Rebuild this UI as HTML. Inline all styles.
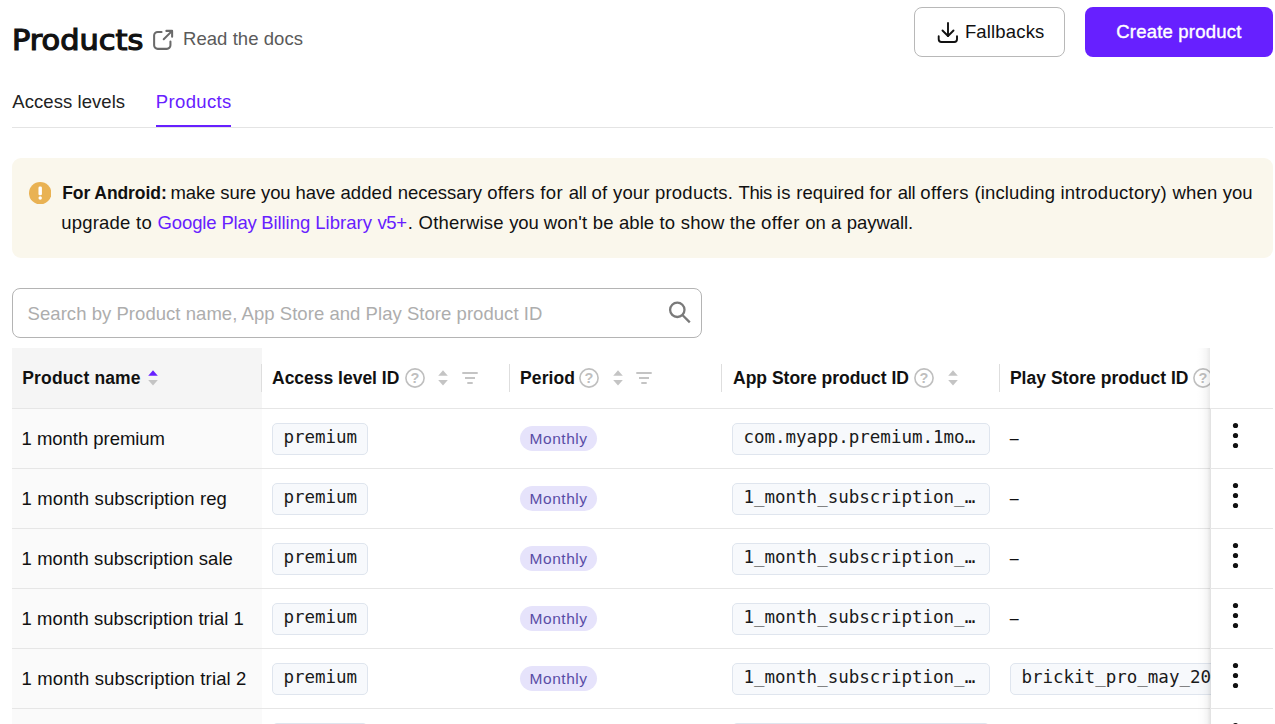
<!DOCTYPE html><html lang="en"><head><meta charset="utf-8"><title>Products</title><style>
*{box-sizing:border-box;margin:0;padding:0}
html,body{width:1275px;height:724px;overflow:hidden;background:#fff}
body{position:relative;font-family:"Liberation Sans",sans-serif;color:#111}
.abs{position:absolute;white-space:nowrap}
.ico{position:absolute}
.btn{position:absolute;top:7px;height:50px;border-radius:8px}
.b1{left:914px;width:151px;border:1px solid #b8b8b8;background:#fff}
.b2{left:1085px;width:188px;background:#6720ff}
.tabline{position:absolute;left:12px;top:127px;width:1261px;height:1px;background:#e4e4e4}
.tabsel{position:absolute;left:156px;top:125px;width:75px;height:2px;background:#6720ff}
.alert{position:absolute;left:12px;top:158px;width:1261px;height:100px;border-radius:9px;background:#faf7ec}
.search{position:absolute;left:12px;top:288px;width:690px;height:50px;border:1px solid #b4b4b4;border-radius:8px;background:#fff}
.th1{position:absolute;left:12px;top:348px;width:250px;height:60px;background:#f5f5f5}
.hline{position:absolute;left:12px;top:408px;width:1261px;height:1px;background:#e6e6e6}
.sep{position:absolute;top:364px;width:1px;height:28px;background:#dedede}
.rl{position:absolute;left:12px;width:1261px;height:1px;background:#e6e6e6}
.c1{position:absolute;left:12px;width:250px;height:59px;background:#fafafa}
.chip{position:absolute;height:32px;border:1px solid #dfe5ee;border-radius:5px;background:#f7f9fc}
.pill{position:absolute;left:520px;width:77px;height:25px;border-radius:13px;background:#e6e3fb}
.shadow{position:absolute;width:14px}
.sh1{left:1196px;top:348px;height:60px;background:linear-gradient(to right,rgba(0,0,0,0),rgba(0,0,0,0.012) 40%,rgba(0,0,0,0.035) 72%,rgba(0,0,0,0.085))}
.sh2{left:1197px;top:408px;height:316px;background:linear-gradient(to right,rgba(0,0,0,0),rgba(0,0,0,0.012) 40%,rgba(0,0,0,0.04) 72%,rgba(0,0,0,0.12))}
.sticky{position:absolute;background:#fff}
.st1{left:1210px;top:348px;width:65px;height:60px}
.st2{left:1211px;top:408px;width:64px;height:316px}
.dots{fill:#111}
</style></head><body>
<span class="abs" style="left:11.8px;top:28.07px;font-size:27.5px;line-height:24px;font-family:'DejaVu Sans',sans-serif;-webkit-text-stroke:1.2px #111;transform-origin:0 0;transform:scaleX(1.105);">Products</span>
<svg class="ico" style="left:151px;top:28px" width="24" height="24" viewBox="0 0 20 20" fill="none" stroke="#6a6a6a" stroke-width="1.7" stroke-linecap="round" stroke-linejoin="round"><path d="M8.800 3.3H5.6A3 3 0 0 0 2.6 6.3V14.4a3 3 0 0 0 3 3h7.600a3 3 0 0 0 3-3V11.2"/><path d="M12.800 2.400H17.600V7.200"/><path d="M17.400 2.600L10.600 9.400"/></svg>
<span class="abs" style="left:183px;top:26.79px;font-size:18.5px;line-height:24px;letter-spacing:0.06px;color:#5a5a5a;">Read the docs</span>
<div class="btn b1"></div><div class="btn b2"></div>
<svg class="ico" style="left:935.5px;top:20px" width="24" height="26" viewBox="0 0 24 26" fill="none" stroke="#111" stroke-width="1.9" stroke-linecap="round" stroke-linejoin="round"><path d="M12 3V16"/><path d="M6.5 10.5L12 16L17.5 10.5"/><path d="M2.7 16.3V19.3a2.700 2.700 0 0 0 2.700 2.700H18.3a2.700 2.700 0 0 0 2.700-2.700V16.3"/></svg>
<span class="abs" style="left:964.9px;top:20.19px;font-size:18.5px;line-height:24px;letter-spacing:0.16px;">Fallbacks</span>
<span class="abs" style="left:1116.2px;top:20.19px;font-size:18.5px;line-height:24px;letter-spacing:0.21px;color:#fff;-webkit-text-stroke:0.4px #fff;">Create product</span>
<span class="abs" style="left:12.3px;top:89.59px;font-size:18.5px;line-height:24px;letter-spacing:0.06px;color:#222;">Access levels</span>
<span class="abs" style="left:155.8px;top:89.59px;font-size:18.5px;line-height:24px;letter-spacing:0.36px;color:#6720ff;">Products</span>
<div class="tabline"></div><div class="tabsel"></div>
<div class="alert"></div>
<svg class="ico" style="left:28.8px;top:181.800px" width="22.4" height="22.4" viewBox="0 0 22 22"><circle cx="11" cy="11" r="11" fill="#e9b253"/><rect x="9.3" y="4.5" width="3.4" height="8.6" rx="1.3" fill="#fff"/><circle cx="11" cy="15.800" r="1.7" fill="#fff"/></svg>
<span class="abs" style="left:62.2px;top:181.44px;font-size:17.5px;line-height:24px;font-weight:700;letter-spacing:-0.07px;">For Android:</span>
<span class="abs" style="left:170.5px;top:181.09px;font-size:18.5px;line-height:24px;letter-spacing:-0.14px;">make </span>
<span class="abs" style="left:220.2px;top:181.09px;font-size:18.5px;line-height:24px;letter-spacing:-0.05px;">sure </span>
<span class="abs" style="left:261.1px;top:181.09px;font-size:18.5px;line-height:24px;letter-spacing:-0.14px;">you </span>
<span class="abs" style="left:295.5px;top:181.09px;font-size:18.5px;line-height:24px;letter-spacing:-0.07px;">have </span>
<span class="abs" style="left:340.4px;top:181.09px;font-size:18.5px;line-height:24px;letter-spacing:0.12px;">added </span>
<span class="abs" style="left:397.7px;top:181.09px;font-size:18.5px;line-height:24px;letter-spacing:0.01px;">necessary </span>
<span class="abs" style="left:487.3px;top:181.09px;font-size:18.5px;line-height:24px;letter-spacing:0.26px;">offers </span>
<span class="abs" style="left:540.2px;top:181.09px;font-size:18.5px;line-height:24px;letter-spacing:0.47px;">for </span>
<span class="abs" style="left:568.8px;top:181.09px;font-size:18.5px;line-height:24px;letter-spacing:-0.26px;">all </span>
<span class="abs" style="left:591.4px;top:181.09px;font-size:18.5px;line-height:24px;letter-spacing:0.34px;">of </span>
<span class="abs" style="left:613px;top:181.09px;font-size:18.5px;line-height:24px;letter-spacing:0.15px;">your </span>
<span class="abs" style="left:654.9px;top:181.09px;font-size:18.5px;line-height:24px;letter-spacing:0.24px;">products. </span>
<span class="abs" style="left:738.5px;top:181.09px;font-size:18.5px;line-height:24px;letter-spacing:-0.36px;">This </span>
<span class="abs" style="left:776.8px;top:181.09px;font-size:18.5px;line-height:24px;letter-spacing:0.33px;">is </span>
<span class="abs" style="left:796.3px;top:181.09px;font-size:18.5px;line-height:24px;letter-spacing:0.03px;">required </span>
<span class="abs" style="left:869.6px;top:181.09px;font-size:18.5px;line-height:24px;letter-spacing:0.34px;">for </span>
<span class="abs" style="left:897.7px;top:181.09px;font-size:18.5px;line-height:24px;letter-spacing:-0.26px;">all </span>
<span class="abs" style="left:920.3px;top:181.09px;font-size:18.5px;line-height:24px;letter-spacing:0.45px;">offers </span>
<span class="abs" style="left:974.5px;top:181.09px;font-size:18.5px;line-height:24px;letter-spacing:0.14px;">(including </span>
<span class="abs" style="left:1060.4px;top:181.09px;font-size:18.5px;line-height:24px;letter-spacing:0.29px;">introductory) </span>
<span class="abs" style="left:1172.4px;top:181.09px;font-size:18.5px;line-height:24px;letter-spacing:0.21px;">when </span>
<span class="abs" style="left:1222.8px;top:181.09px;font-size:18.5px;line-height:24px;letter-spacing:0.01px;">you </span>
<span class="abs" style="left:61.2px;top:211.19px;font-size:18.5px;line-height:24px;letter-spacing:0.22px;">upgrade </span>
<span class="abs" style="left:136px;top:211.19px;font-size:18.5px;line-height:24px;letter-spacing:0.31px;">to </span>
<span class="abs" style="left:157.5px;top:211.19px;font-size:18.5px;line-height:24px;letter-spacing:-0.1px;color:#6720ff;">Google </span>
<span class="abs" style="left:221.6px;top:211.19px;font-size:18.5px;line-height:24px;letter-spacing:-0.31px;color:#6720ff;">Play </span>
<span class="abs" style="left:261.2px;top:211.19px;font-size:18.5px;line-height:24px;letter-spacing:-0.06px;color:#6720ff;">Billing </span>
<span class="abs" style="left:315.2px;top:211.19px;font-size:18.5px;line-height:24px;letter-spacing:0.06px;color:#6720ff;">Library </span>
<span class="abs" style="left:377.4px;top:211.19px;font-size:18.5px;line-height:24px;letter-spacing:-0.28px;color:#6720ff;">v5+</span>
<span class="abs" style="left:407.8px;top:211.19px;font-size:18.5px;line-height:24px;letter-spacing:0.26px;">. </span>
<span class="abs" style="left:418.6px;top:211.19px;font-size:18.5px;line-height:24px;letter-spacing:0.22px;">Otherwise </span>
<span class="abs" style="left:509.2px;top:211.19px;font-size:18.5px;line-height:24px;letter-spacing:-0.09px;">you </span>
<span class="abs" style="left:543.8px;top:211.19px;font-size:18.5px;line-height:24px;letter-spacing:0.21px;">won't </span>
<span class="abs" style="left:592.8px;top:211.19px;font-size:18.5px;line-height:24px;letter-spacing:0.16px;">be </span>
<span class="abs" style="left:619px;top:211.19px;font-size:18.5px;line-height:24px;letter-spacing:0.06px;">able </span>
<span class="abs" style="left:659.4px;top:211.19px;font-size:18.5px;line-height:24px;letter-spacing:0.28px;">to </span>
<span class="abs" style="left:680.8px;top:211.19px;font-size:18.5px;line-height:24px;letter-spacing:0.11px;">show </span>
<span class="abs" style="left:729.7px;top:211.19px;font-size:18.5px;line-height:24px;letter-spacing:0.14px;">the </span>
<span class="abs" style="left:761.1px;top:211.19px;font-size:18.5px;line-height:24px;letter-spacing:0.38px;">offer </span>
<span class="abs" style="left:805.2px;top:211.19px;font-size:18.5px;line-height:24px;letter-spacing:0.03px;">on </span>
<span class="abs" style="left:831px;top:211.19px;font-size:18.5px;line-height:24px;letter-spacing:0.19px;">a </span>
<span class="abs" style="left:846.8px;top:211.19px;font-size:18.5px;line-height:24px;letter-spacing:-0.06px;">paywall. </span>
<div class="search"></div>
<span class="abs" style="left:27.6px;top:302.09px;font-size:18.5px;line-height:24px;letter-spacing:0.045px;color:#adadad;">Search by Product name, App Store and Play Store product ID</span>
<svg class="ico" style="left:665px;top:298px" width="30" height="30" viewBox="0 0 30 30" fill="none" stroke="#7a7a7a" stroke-width="2.300"><circle cx="12.300" cy="11.800" r="7.200"/><path d="M17.4 17L24.800 24.400"/></svg>
<div class="th1"></div>
<span class="abs" style="left:22.3px;top:365.94px;font-size:17.5px;line-height:24px;font-weight:700;letter-spacing:0.14px;">Product name</span>
<span class="abs" style="left:272px;top:365.94px;font-size:17.5px;line-height:24px;font-weight:700;letter-spacing:-0.01px;">Access level ID</span>
<span class="abs" style="left:520.1px;top:365.94px;font-size:17.5px;line-height:24px;font-weight:700;letter-spacing:0.1px;">Period</span>
<span class="abs" style="left:733px;top:365.94px;font-size:17.5px;line-height:24px;font-weight:700;">App Store product ID</span>
<span class="abs" style="left:1009.9px;top:365.94px;font-size:17.5px;line-height:24px;font-weight:700;letter-spacing:0.03px;">Play Store product ID</span>
<div class="sep" style="left:261px"></div>
<div class="sep" style="left:509px"></div>
<div class="sep" style="left:721px"></div>
<div class="sep" style="left:999px"></div>
<svg class="ico" style="left:147px;top:369px" width="12" height="18" viewBox="0 0 12 18"><path d="M6 1.3L10.800 6.800H1.2Z" fill="#6720ff"/><path d="M6 16.500L10.800 11H1.2Z" fill="#c4c4c4"/></svg>
<svg class="ico" style="left:437px;top:369px" width="12" height="18" viewBox="0 0 12 18"><path d="M6 1.3L10.800 6.800H1.2Z" fill="#c4c4c4"/><path d="M6 16.500L10.800 11H1.2Z" fill="#c4c4c4"/></svg>
<svg class="ico" style="left:612px;top:369px" width="12" height="18" viewBox="0 0 12 18"><path d="M6 1.3L10.800 6.800H1.2Z" fill="#c4c4c4"/><path d="M6 16.500L10.800 11H1.2Z" fill="#c4c4c4"/></svg>
<svg class="ico" style="left:947px;top:369px" width="12" height="18" viewBox="0 0 12 18"><path d="M6 1.3L10.800 6.800H1.2Z" fill="#c4c4c4"/><path d="M6 16.500L10.800 11H1.2Z" fill="#c4c4c4"/></svg>
<svg class="ico" style="left:405px;top:368px" width="20" height="20" viewBox="0 0 20 20"><circle cx="10" cy="10" r="9.1" fill="none" stroke="#bfbfbf" stroke-width="1.6"/><text x="10" y="15.200" text-anchor="middle" font-family="Liberation Sans, sans-serif" font-size="14.500" font-weight="700" fill="#bfbfbf">?</text></svg>
<svg class="ico" style="left:579px;top:368px" width="20" height="20" viewBox="0 0 20 20"><circle cx="10" cy="10" r="9.1" fill="none" stroke="#bfbfbf" stroke-width="1.6"/><text x="10" y="15.200" text-anchor="middle" font-family="Liberation Sans, sans-serif" font-size="14.500" font-weight="700" fill="#bfbfbf">?</text></svg>
<svg class="ico" style="left:914px;top:368px" width="20" height="20" viewBox="0 0 20 20"><circle cx="10" cy="10" r="9.1" fill="none" stroke="#bfbfbf" stroke-width="1.6"/><text x="10" y="15.200" text-anchor="middle" font-family="Liberation Sans, sans-serif" font-size="14.500" font-weight="700" fill="#bfbfbf">?</text></svg>
<svg class="ico" style="left:1193px;top:368px" width="20" height="20" viewBox="0 0 20 20"><circle cx="10" cy="10" r="9.1" fill="none" stroke="#bfbfbf" stroke-width="1.6"/><text x="10" y="15.200" text-anchor="middle" font-family="Liberation Sans, sans-serif" font-size="14.500" font-weight="700" fill="#bfbfbf">?</text></svg>
<svg class="ico" style="left:461px;top:371px" width="18" height="14" viewBox="0 0 18 14" fill="#c4c4c4"><rect x="1.3" y="1" width="15.400" height="2"/><rect x="4" y="6" width="10" height="2"/><rect x="6.3" y="11" width="5.4" height="2"/></svg>
<svg class="ico" style="left:635px;top:371px" width="18" height="14" viewBox="0 0 18 14" fill="#c4c4c4"><rect x="1.3" y="1" width="15.400" height="2"/><rect x="4" y="6" width="10" height="2"/><rect x="6.3" y="11" width="5.4" height="2"/></svg>
<div class="hline"></div>
<div class="rl" style="top:408px"></div><div class="c1" style="top:409px"></div>
<span class="abs" style="left:21.6px;top:426.79px;font-size:18.5px;line-height:24px;letter-spacing:-0.04px;">1 month premium</span>
<div class="chip" style="left:272px;top:423px;width:96px"></div>
<span class="abs" style="left:283.4px;top:424.94px;font-size:17.5px;line-height:24px;color:#1a1a1a;font-family:'DejaVu Sans Mono','Liberation Mono',monospace;">premium</span>
<div class="pill" style="top:426px"></div>
<span class="abs" style="left:529.6px;top:427.03px;font-size:15.5px;line-height:24px;letter-spacing:0.52px;color:#594da6;">Monthly</span>
<div class="chip" style="left:732px;top:423px;width:258px"></div>
<span class="abs" style="left:743.4px;top:424.94px;font-size:17.5px;line-height:24px;color:#1a1a1a;font-family:'DejaVu Sans Mono','Liberation Mono',monospace;">com.myapp.premium.1mo…</span>
<span class="abs" style="left:1009.7px;top:427.06px;font-size:16px;line-height:24px;">–</span>
<div class="rl" style="top:468px"></div><div class="c1" style="top:469px"></div>
<span class="abs" style="left:21.6px;top:486.79px;font-size:18.5px;line-height:24px;letter-spacing:0.118px;">1 month subscription reg</span>
<div class="chip" style="left:272px;top:483px;width:96px"></div>
<span class="abs" style="left:283.4px;top:484.94px;font-size:17.5px;line-height:24px;color:#1a1a1a;font-family:'DejaVu Sans Mono','Liberation Mono',monospace;">premium</span>
<div class="pill" style="top:486px"></div>
<span class="abs" style="left:529.6px;top:487.03px;font-size:15.5px;line-height:24px;letter-spacing:0.52px;color:#594da6;">Monthly</span>
<div class="chip" style="left:732px;top:483px;width:258px"></div>
<span class="abs" style="left:743.4px;top:484.94px;font-size:17.5px;line-height:24px;color:#1a1a1a;font-family:'DejaVu Sans Mono','Liberation Mono',monospace;">1_month_subscription_…</span>
<span class="abs" style="left:1009.7px;top:487.06px;font-size:16px;line-height:24px;">–</span>
<div class="rl" style="top:528px"></div><div class="c1" style="top:529px"></div>
<span class="abs" style="left:21.6px;top:546.79px;font-size:18.5px;line-height:24px;letter-spacing:0.063px;">1 month subscription sale</span>
<div class="chip" style="left:272px;top:543px;width:96px"></div>
<span class="abs" style="left:283.4px;top:544.95px;font-size:17.5px;line-height:24px;color:#1a1a1a;font-family:'DejaVu Sans Mono','Liberation Mono',monospace;">premium</span>
<div class="pill" style="top:546px"></div>
<span class="abs" style="left:529.6px;top:547.03px;font-size:15.5px;line-height:24px;letter-spacing:0.52px;color:#594da6;">Monthly</span>
<div class="chip" style="left:732px;top:543px;width:258px"></div>
<span class="abs" style="left:743.4px;top:544.95px;font-size:17.5px;line-height:24px;color:#1a1a1a;font-family:'DejaVu Sans Mono','Liberation Mono',monospace;">1_month_subscription_…</span>
<span class="abs" style="left:1009.7px;top:547.06px;font-size:16px;line-height:24px;">–</span>
<div class="rl" style="top:588px"></div><div class="c1" style="top:589px"></div>
<span class="abs" style="left:21.6px;top:606.79px;font-size:18.5px;line-height:24px;letter-spacing:0.045px;">1 month subscription trial 1</span>
<div class="chip" style="left:272px;top:603px;width:96px"></div>
<span class="abs" style="left:283.4px;top:604.95px;font-size:17.5px;line-height:24px;color:#1a1a1a;font-family:'DejaVu Sans Mono','Liberation Mono',monospace;">premium</span>
<div class="pill" style="top:606px"></div>
<span class="abs" style="left:529.6px;top:607.03px;font-size:15.5px;line-height:24px;letter-spacing:0.52px;color:#594da6;">Monthly</span>
<div class="chip" style="left:732px;top:603px;width:258px"></div>
<span class="abs" style="left:743.4px;top:604.95px;font-size:17.5px;line-height:24px;color:#1a1a1a;font-family:'DejaVu Sans Mono','Liberation Mono',monospace;">1_month_subscription_…</span>
<span class="abs" style="left:1009.7px;top:607.06px;font-size:16px;line-height:24px;">–</span>
<div class="rl" style="top:648px"></div><div class="c1" style="top:649px"></div>
<span class="abs" style="left:21.6px;top:666.79px;font-size:18.5px;line-height:24px;letter-spacing:0.137px;">1 month subscription trial 2</span>
<div class="chip" style="left:272px;top:663px;width:96px"></div>
<span class="abs" style="left:283.4px;top:664.95px;font-size:17.5px;line-height:24px;color:#1a1a1a;font-family:'DejaVu Sans Mono','Liberation Mono',monospace;">premium</span>
<div class="pill" style="top:666px"></div>
<span class="abs" style="left:529.6px;top:667.03px;font-size:15.5px;line-height:24px;letter-spacing:0.52px;color:#594da6;">Monthly</span>
<div class="chip" style="left:732px;top:663px;width:258px"></div>
<span class="abs" style="left:743.4px;top:664.95px;font-size:17.5px;line-height:24px;color:#1a1a1a;font-family:'DejaVu Sans Mono','Liberation Mono',monospace;">1_month_subscription_…</span>
<div class="chip" style="left:1010px;top:663px;width:258px"></div>
<span class="abs" style="left:1021.4px;top:664.95px;font-size:17.5px;line-height:24px;color:#1a1a1a;font-family:'DejaVu Sans Mono','Liberation Mono',monospace;">brickit_pro_may_2023</span>
<div class="rl" style="top:708px"></div><div class="c1" style="top:709px"></div>
<span class="abs" style="left:21.6px;top:726.79px;font-size:18.5px;line-height:24px;letter-spacing:0.137px;">1 month subscription trial 3</span>
<div class="chip" style="left:272px;top:723px;width:96px"></div>
<span class="abs" style="left:283.4px;top:724.95px;font-size:17.5px;line-height:24px;color:#1a1a1a;font-family:'DejaVu Sans Mono','Liberation Mono',monospace;">premium</span>
<div class="pill" style="top:726px"></div>
<span class="abs" style="left:529.6px;top:727.03px;font-size:15.5px;line-height:24px;letter-spacing:0.52px;color:#594da6;">Monthly</span>
<div class="chip" style="left:732px;top:723px;width:258px"></div>
<span class="abs" style="left:743.4px;top:724.95px;font-size:17.5px;line-height:24px;color:#1a1a1a;font-family:'DejaVu Sans Mono','Liberation Mono',monospace;">1_month_subscription_…</span>
<span class="abs" style="left:1009.7px;top:727.06px;font-size:16px;line-height:24px;">–</span>
<div class="shadow sh1"></div><div class="shadow sh2"></div><div class="sticky st1"></div><div class="sticky st2"></div>
<div class="rl" style="top:408px;left:1210px;width:63px"></div>
<svg class="ico dots" style="left:1232px;top:422px" width="7" height="27" viewBox="0 0 7 27"><circle cx="3.500" cy="3.500" r="2.600"/><circle cx="3.500" cy="13.500" r="2.600"/><circle cx="3.500" cy="23.500" r="2.600"/></svg>
<div class="rl" style="top:468px;left:1210px;width:63px"></div>
<svg class="ico dots" style="left:1232px;top:482px" width="7" height="27" viewBox="0 0 7 27"><circle cx="3.500" cy="3.500" r="2.600"/><circle cx="3.500" cy="13.500" r="2.600"/><circle cx="3.500" cy="23.500" r="2.600"/></svg>
<div class="rl" style="top:528px;left:1210px;width:63px"></div>
<svg class="ico dots" style="left:1232px;top:542px" width="7" height="27" viewBox="0 0 7 27"><circle cx="3.500" cy="3.500" r="2.600"/><circle cx="3.500" cy="13.500" r="2.600"/><circle cx="3.500" cy="23.500" r="2.600"/></svg>
<div class="rl" style="top:588px;left:1210px;width:63px"></div>
<svg class="ico dots" style="left:1232px;top:602px" width="7" height="27" viewBox="0 0 7 27"><circle cx="3.500" cy="3.500" r="2.600"/><circle cx="3.500" cy="13.500" r="2.600"/><circle cx="3.500" cy="23.500" r="2.600"/></svg>
<div class="rl" style="top:648px;left:1210px;width:63px"></div>
<svg class="ico dots" style="left:1232px;top:662px" width="7" height="27" viewBox="0 0 7 27"><circle cx="3.500" cy="3.500" r="2.600"/><circle cx="3.500" cy="13.500" r="2.600"/><circle cx="3.500" cy="23.500" r="2.600"/></svg>
<div class="rl" style="top:708px;left:1210px;width:63px"></div>
<svg class="ico dots" style="left:1232px;top:722px" width="7" height="27" viewBox="0 0 7 27"><circle cx="3.500" cy="3.500" r="2.600"/><circle cx="3.500" cy="13.500" r="2.600"/><circle cx="3.500" cy="23.500" r="2.600"/></svg>
</body></html>
